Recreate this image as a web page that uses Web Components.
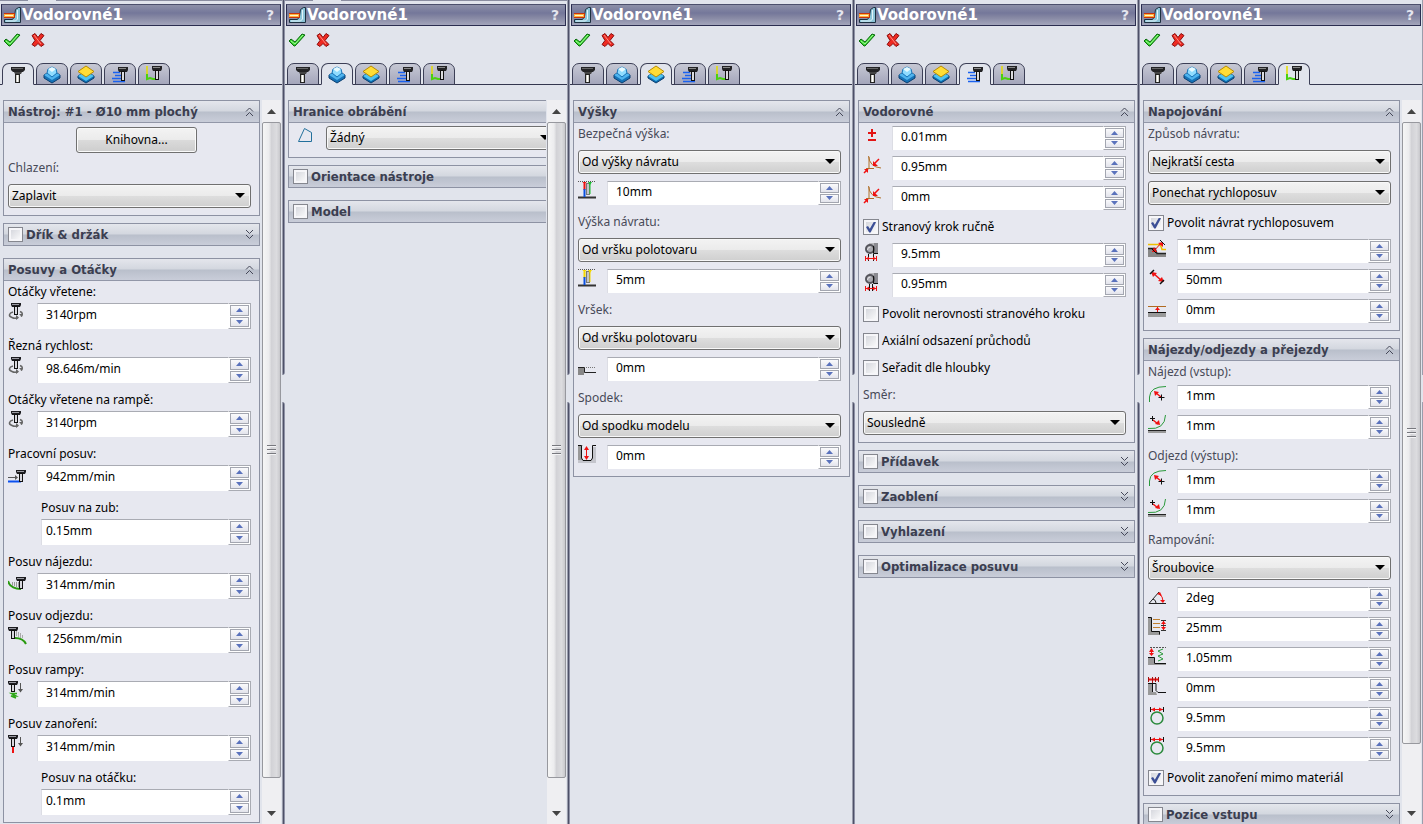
<!DOCTYPE html>
<html lang="cs">
<head>
<meta charset="utf-8">
<title>Vodorovné1</title>
<style>
  html, body { margin: 0; height: 100%; }
  body {
    font: 12px/22px "Noto Sans", "DejaVu Sans Condensed", sans-serif;
    color: #000;
    background: #e1e4ec;
    overflow: hidden;
  }
  main {
    display: grid;
    grid-template-columns: repeat(4, minmax(0, 285fr)) minmax(0, 283fr);
    height: 100vh;
  }
</style>
</head>
<body>
<main>
  <cam-panel name="Vodorovné1" active="0" scroll="656" rest="24" strip>
    <cam-section heading="Nástroj: #1 - Ø10 mm plochý">
      <cam-button>Knihovna...</cam-button>
      <cam-select label="Chlazení:" value="Zaplavit"></cam-select>
    </cam-section>
    <cam-section heading="Dřík &amp; držák" checkable collapsed></cam-section>
    <cam-section heading="Posuvy a Otáčky">
      <cam-field tall icon="spin" label="Otáčky vřetene:" value="3140rpm"></cam-field>
      <cam-field tall icon="spin" label="Řezná rychlost:" value="98.646m/min"></cam-field>
      <cam-field tall icon="spin" label="Otáčky vřetene na rampě:" value="3140rpm"></cam-field>
      <cam-field tall icon="feed" label="Pracovní posuv:" value="942mm/min"></cam-field>
      <cam-field tall indent label="Posuv na zub:" value="0.15mm"></cam-field>
      <cam-field tall icon="leadin" label="Posuv nájezdu:" value="314mm/min"></cam-field>
      <cam-field tall icon="leadout" label="Posuv odjezdu:" value="1256mm/min"></cam-field>
      <cam-field tall icon="ramp" label="Posuv rampy:" value="314mm/min"></cam-field>
      <cam-field tall icon="plunge" label="Posuv zanoření:" value="314mm/min"></cam-field>
      <cam-field tall indent label="Posuv na otáčku:" value="0.1mm"></cam-field>
    </cam-section>
  </cam-panel>

  <cam-panel name="Vodorovné1" active="1" scroll="656" rest="24" clipped strip>
    <cam-section heading="Hranice obrábění" inset>
      <cam-select icon="boundary" name="Hranice obrábění" value="Žádný"></cam-select>
    </cam-section>
    <cam-section heading="Orientace nástroje" checkable collapsed></cam-section>
    <cam-section heading="Model" checkable collapsed></cam-section>
  </cam-panel>

  <cam-panel name="Vodorovné1" active="2">
    <cam-section heading="Výšky">
      <cam-select label="Bezpečná výška:" value="Od výšky návratu"></cam-select>
      <cam-field icon="clearance" name="Bezpečná výška – odsazení" value="10mm"></cam-field>
      <cam-select label="Výška návratu:" value="Od vršku polotovaru"></cam-select>
      <cam-field icon="retract" name="Výška návratu – odsazení" value="5mm"></cam-field>
      <cam-select label="Vršek:" value="Od vršku polotovaru"></cam-select>
      <cam-field icon="top" name="Vršek – odsazení" value="0mm"></cam-field>
      <cam-select label="Spodek:" value="Od spodku modelu"></cam-select>
      <cam-field icon="bottom" name="Spodek – odsazení" value="0mm"></cam-field>
    </cam-section>
  </cam-panel>

  <cam-panel name="Vodorovné1" active="3">
    <cam-section heading="Vodorovné" inset>
      <cam-field icon="plusminus" name="Tolerance" value="0.01mm"></cam-field>
      <cam-field icon="smooth" name="Vyhlazovací odchylka" value="0.95mm"></cam-field>
      <cam-field icon="smooth" name="Odchylka rohů" value="0mm"></cam-field>
      <cam-check checked>Stranový krok ručně</cam-check>
      <cam-field icon="stepmax" name="Maximální stranový krok" value="9.5mm"></cam-field>
      <cam-field icon="stepmin" name="Minimální stranový krok" value="0.95mm"></cam-field>
      <cam-check>Povolit nerovnosti stranového kroku</cam-check>
      <cam-check>Axiální odsazení průchodů</cam-check>
      <cam-check>Seřadit dle hloubky</cam-check>
      <cam-select label="Směr:" value="Sousledně"></cam-select>
    </cam-section>
    <cam-section heading="Přídavek" checkable collapsed></cam-section>
    <cam-section heading="Zaoblení" checkable collapsed></cam-section>
    <cam-section heading="Vyhlazení" checkable collapsed></cam-section>
    <cam-section heading="Optimalizace posuvu" checkable collapsed></cam-section>
  </cam-panel>

  <cam-panel name="Vodorovné1" active="4" scroll="621" rest="58">
    <cam-section heading="Napojování">
      <cam-select label="Způsob návratu:" value="Nejkratší cesta"></cam-select>
      <cam-select name="Rychloposuv" value="Ponechat rychloposuv"></cam-select>
      <cam-check checked>Povolit návrat rychloposuvem</cam-check>
      <cam-field icon="safe" name="Bezpečná vzdálenost" value="1mm"></cam-field>
      <cam-field icon="stay" name="Maximální vzdálenost" value="50mm"></cam-field>
      <cam-field icon="lift" name="Výška zdvihu" value="0mm"></cam-field>
    </cam-section>
    <cam-section heading="Nájezdy/odjezdy a přejezdy">
      <cam-field dim icon="arcin" label="Nájezd (vstup):" value="1mm"></cam-field>
      <cam-field icon="arcdown" name="Svislý poloměr nájezdu" value="1mm"></cam-field>
      <cam-field dim icon="arcin" label="Odjezd (výstup):" value="1mm"></cam-field>
      <cam-field icon="arcdown" name="Svislý poloměr odjezdu" value="1mm"></cam-field>
      <cam-select label="Rampování:" value="Šroubovice"></cam-select>
      <cam-field icon="angle" name="Úhel rampování" value="2deg"></cam-field>
      <cam-field icon="rampstep" name="Maximální krok rampy" value="25mm"></cam-field>
      <cam-field icon="rampclear" name="Výška rampy" value="1.05mm"></cam-field>
      <cam-field icon="rampside" name="Radiální vůle rampy" value="0mm"></cam-field>
      <cam-field icon="helix" name="Průměr šroubovice" value="9.5mm"></cam-field>
      <cam-field icon="helix" name="Minimální průměr šroubovice" value="9.5mm"></cam-field>
      <cam-check checked>Povolit zanoření mimo materiál</cam-check>
    </cam-section>
    <cam-section heading="Pozice vstupu" checkable collapsed></cam-section>
  </cam-panel>
</main>

<script>
/* Small end mill: dark head, light shank. */
const mill = (x, y, len = 8) =>
  `<path d="M${x} ${y}h10v2l-1 2h-8l-1-2z" fill="#1c1c20"/><path d="M${x + 1} ${y + 1.5}h7" stroke="#9a9aa2"/>` +
  `<rect x="${x + 3.5}" y="${y + 3.5}" width="3" height="${len}" fill="#d8d8de" stroke="#111"/>`;
const down = `<path d="M12.500 2v9" stroke="#555"/><path d="M10 8l2.500 3.500L15 8z" fill="#555"/>`;
const clear = (a, b) =>
  `<path d="M0 .5h18" stroke="#555" stroke-dasharray="1 1"/><path d="M0 16.500h18" stroke="#333" stroke-width="2"/>
   <path d="M6.500 3v6" stroke="${a}" stroke-width="2"/><path d="M6.500 8v8" stroke="#0a50e0" stroke-width="2"/>
   <rect x="8.500" y="2.500" width="3" height="11" fill="#c4c4ca" stroke="#777"/>
   <path d="M12 2v11" stroke="${b}"/><path d="M4.500 1h4l-2 3z" fill="${a}"/><path d="M10 1h4l-2 3z" fill="${b}"/>`;
const step = (a, b) =>
  `<rect x="6" y="0" width="9" height="10" fill="#b9b9bd"/><rect x="11" y="0" width="4" height="10" fill="#8a8a90"/>
   <circle cx="7" cy="6" r="4" fill="#aaaab0" stroke="#55555c" stroke-width="2"/><path d="M4.500 7a3 3 0 0 1 3-3" stroke="#e6e6ea" fill="none"/>
   <path d="M10.500 3v7.500H15M${a}.5 11v7M${b}.5 11v7" stroke="#111" fill="none"/>
   <path d="M3 15.500h10" stroke="#e11"/><path d="M2.500 13v5M13.500 13v5" stroke="#e11"/><path d="M3 15.500l3-2v4zM13 15.500l-3-2v4z" fill="#e11"/>`;

const ICONS = {
  /* property rows */
  spin: `${mill(3, 0)}<path d="M5 9C1 10 0 13 4 14.500q3 1.500 6 0" stroke="#666" stroke-width="1.500" fill="none"/><path d="M12 8.500q4 1.500 1 5" stroke="#666" stroke-width="1.500" fill="none"/><path d="M8 12v5l3-2.500zM11 11l4 0-1 3z" fill="#666"/>`,
  feed: `<path d="M0 16.500h13" stroke="#0a50f0" stroke-width="2"/>${mill(8, 5)}<path d="M0 12.500h8" stroke="#555"/><path d="M7 10l3 2.500L7 15z" fill="#555"/>`,
  leadin: `<path d="M0 8q2 8 13 8" stroke="#2a9a10" stroke-width="2" fill="none"/><path d="M4.500 9v4M6.500 9v4M8.500 9v5M10.500 9v5" stroke="#999"/>${mill(8, 4)}`,
  leadout: `<path d="M7 11q8 0 11 6" stroke="#2a9a10" stroke-width="2" fill="none"/><path d="M8.500 4v5M10.500 5v5M12.500 6v5M14.500 8v3" stroke="#aaa"/>${mill(0, 0)}`,
  ramp: `${mill(0, 0, 7)}<path d="M9 12.500H3.500L8 15H3l5 2" stroke="#2fa81a" stroke-width="1.500" fill="none"/>${down}`,
  plunge: `<path d="M5 12v6" stroke="#e11" stroke-width="2"/>${mill(0, 0)}${down}`,
  boundary: `<path d="M5.500 15.500L11.500 2.500 18.500 6.500v9z" fill="none" stroke="#22709c"/>`,
  clearance: clear('#f01010', '#18c030'),
  retract: clear('#f4d800', '#f4d800'),
  top: `<path d="M0 10h6v8H0z" fill="#888"/><path d="M8 10.500h10" stroke="#777" stroke-dasharray="1 1"/><path d="M0 10.500h6.500v5H18" stroke="#222" fill="none"/>`,
  bottom: `<path d="M0 0h5v18H0z" fill="#999"/><path d="M12 2h6v16H0v-3h10z" fill="#c4c5cc"/><path d="M0 .5h3.500V13l1.500 2.500h8l1.500-2.500V.5H18" stroke="#111" fill="#e8e9f1"/><path d="M8.500 3v10" stroke="#f01010"/><path d="M6 5l2.500-4L11 5zM6 11l2.500 4 2.500-4z" fill="#f01010"/>`,
  plusminus: `<path d="M9 3v8M5 7h8M5 14h8" stroke="#e31515" stroke-width="2"/>`,
  smooth: `<path d="M5.500 0q1 11 12.500 12M6 1v11M3 12.500h8" stroke="#b0702a" fill="none"/><path d="M16 3l-5 5M1 17l4-4" stroke="#f01010" stroke-width="1.500"/><path d="M10 5v5h5zM1 13h4v4z" fill="#f01010"/>`,
  stepmax: step(5, 10),
  stepmin: step(6, 9),
  safe: `<path d="M0 9h7l2 6h9v3H0z" fill="#888"/><path d="M0 9.500h7l2 5h9" stroke="#222" fill="none" stroke-width="1.500"/><path d="M0 5.500h10q3 0 4 5h4" stroke="#f0c000" fill="none" stroke-width="1.500"/><path d="M6 12l7-8" stroke="#f01010"/><path d="M4 13l5 0-3-5zM10 4l5 4 0-5z" fill="#f01010"/><path d="M12 1l5 5M3 9l5 5" stroke="#111"/>`,
  stay: `<path d="M5 4l9 8" stroke="#f01010" stroke-width="1.500"/><path d="M3 3l6 1-4 4zM16 13l-6-1 4-4z" fill="#f01010"/><path d="M2 5l4-4M12 15l4-4" stroke="#111" stroke-width="1.500"/>`,
  lift: `<path d="M0 7.500h18" stroke="#b06a20"/><path d="M0 14h18v4H0z" fill="#999"/><path d="M0 13.500h18" stroke="#111"/><path d="M9.500 8v5" stroke="#f01010"/><path d="M7 11l2.500-3 2.500 3z" fill="#f01010"/>`,
  arcin: `<path d="M1.500 17V12Q2 1.500 18 1.500" stroke="#2b9a3c" fill="none"/><path d="M8 8l5 4" stroke="#f01010" stroke-width="1.500"/><path d="M6 6l5 1-4 4z" fill="#f01010"/><path d="M10.500 12.500h6M13.500 9.500v6" stroke="#111"/>`,
  arcdown: `<path d="M0 13.500Q17 15 17.500 0" stroke="#2b9a3c" fill="none"/><path d="M0 17h18" stroke="#999" stroke-width="2"/><path d="M0 15.500h18" stroke="#222"/><path d="M5 5l5 4" stroke="#f01010" stroke-width="1.500"/><path d="M12 10l-5-1 4-4z" fill="#f01010"/><path d="M2 3.500h5M4.500 1v5" stroke="#111"/>`,
  angle: `<path d="M11 5L1 16.500h17M5 12q3 1 3 4" stroke="#222" fill="none"/><path d="M11 7q4 2 4 7" stroke="#f01010" fill="none"/><path d="M9 7l3-2 2 4zM12 13h5l-2 3z" fill="#f01010"/>`,
  rampstep: `<path d="M0 0h3v14h9v4H0z" fill="#999"/><path d="M0 .5h3.500v14h8v3" stroke="#111" fill="none"/><path d="M5 2.500h7M5 6.500h7M5 10.500h7" stroke="#c08030"/><path d="M15.500 4v9" stroke="#f01010"/><path d="M13 3.500h5M13 8.500h5M13 13.500h5" stroke="#333"/><path d="M13 7l2.500-3 2.500 3zM13 10l2.500 3 2.500-3z" fill="#f01010"/>`,
  rampclear: `<path d="M2 .5h16" stroke="#555" stroke-dasharray="2 1"/><path d="M0 11h6v6h12v1H0z" fill="#999"/><path d="M0 10.500h6.500v6H18" stroke="#111" fill="none"/><path d="M15 2l-5 2 5 3-5 2 5 3-5 2" stroke="#2b9a3c" fill="none"/><path d="M3.500 2v6" stroke="#f01010"/><path d="M1 5l2.500-4L6 5zM1 6l2.500 3L6 6z" fill="#f01010"/>`,
  rampside: `<path d="M0 6h5v9h3l1 3H0z" fill="#999"/><path d="M0 6.500h8v7l2 2h8M4.500 7v8" stroke="#111" fill="none"/><path d="M1 2.500h10" stroke="#f01010" stroke-width="2"/><path d="M.5 0v5M4.500 0v6M7.500 0v5M10.500 0v5" stroke="#a01010"/>`,
  helix: `<circle cx="9" cy="11" r="6" stroke="#2b8a3c" stroke-width="1.500" fill="none"/><path d="M3 2.500h12" stroke="#f01010"/><path d="M2.500 0v5M15.500 0v5" stroke="#111"/><path d="M3 2.500l4-2v4zM15 2.500l-4-2v4z" fill="#f01010"/>`,

  /* tabs */
  tool: `<path d="M4 3h14v3l-2 2H6L4 6z" fill="#232325"/><path d="M5 4.500h11" stroke="#666"/><path d="M7 8h8l-1 2H8z" fill="#444"/><rect x="8.500" y="10.500" width="4" height="8" fill="#cfcfc8" stroke="#222"/><path d="M10.500 11v7" stroke="#fff"/>`,
  model: `<path d="M3 11l8-5 8 5v3l-8 5-8-5z" fill="#1673b8" stroke="#0b3f70"/><path d="M3 11l8-5 8 5-8 5z" fill="#4fb4ee"/><path d="M6 9l1-4 4-2 4 2 1 4-5 4z" fill="#8fdcff" stroke="#1673b8"/><path d="M7 5l4-2 4 2-4 3z" fill="#e6faff"/>`,
  heights: `<path d="M3 12l8-5 8 5v2l-8 5-8-5z" fill="#0d6fb2" stroke="#0b3f70"/><path d="M3 12l8-5 8 5-8 5z" fill="#4fc3f0"/><path d="M3 7.500L11 2l8 5.500-8 5.500z" fill="#ffdd36" stroke="#b88a00"/>`,
  passes: `<path d="M4 8.500h7M6 11.500h6M3 14.500h9M4 17.500h12" stroke="#1a62f0" stroke-width="1.500"/><path d="M9 3h10v3l-1 2h-8l-1-2z" fill="#232325"/><path d="M10 4.500h7" stroke="#888"/><rect x="12.500" y="7.500" width="3" height="9" fill="#dcdce0" stroke="#111"/>`,
  linking: `<path d="M4 2v10" stroke="#e6dc00" stroke-width="1.500"/><path d="M4 10v5l3-1 3 1h3" stroke="#4ad010" stroke-width="2" fill="none"/><path d="M9 2h10v3l-1 2h-8L9 5z" fill="#232325"/><path d="M10 3.500h7" stroke="#888"/><rect x="12.500" y="6.500" width="3" height="9" fill="#dcdce0" stroke="#111"/>`,

  /* title bar and actions */
  operation: `<path d="M1.500 13.500h8l2-3 1-7 3-2h2v15h-16z" fill="#8cc4d8" stroke="#1c3040"/><path d="M14.500 4v9l-2 2H3" fill="none" stroke="#e2f4fa"/><rect x="1" y="7" width="11" height="5" fill="#c8330c"/><rect x="1" y="8" width="10" height="3" fill="#ffb43c"/><path d="M2 9.500h8" stroke="#fff3cf"/>`,
  accept: `<path d="M2 10l2-2 4 3 7-8 3 1-10 11H7z" fill="#35d32c" stroke="#0c6b10"/><path d="M4 10l4 3 8-9" stroke="#a6f79c" fill="none"/>`,
  cancel: `<path d="M4 4.500l3-2 3 4 3-4 3 2-4 5 4 4-3 2-3-3-3 3-3-2 3-4z" fill="#ee2a22" stroke="#8c0d0d"/><path d="M6 4l7 9" stroke="#ff8a80"/>`
};

const BOX = `*{box-sizing:border-box} button,input,select{font:inherit;color:inherit;margin:0}`;

class CamElement extends HTMLElement {
  connectedCallback() {
    if (this.shadowRoot) return;
    const t = document.createElement('template');
    t.innerHTML = `<style>${BOX}${this.css()}</style>${this.html()}`;
    this.attachShadow({ mode: 'open' }).append(t.content.cloneNode(true));
  }
  a(n) { return (this.getAttribute(n) ?? '').replace(/&/g, '&amp;').replace(/"/g, '&quot;'); }
}

class CamIcon extends CamElement {
  css() { return `:host{display:block;width:22px;height:22px} svg{display:block}`; }
  html() { return `<svg width="22" height="22" viewBox="0 0 22 22" aria-hidden="true">${ICONS[this.a('name')] ?? ''}</svg>`; }
}

class CamButton extends CamElement {
  css() {
    return `:host{display:flex;justify-content:center;margin:4px 0;padding-left:14px}
      button{width:53%;height:26px;padding:0;border:1px solid #707070;border-radius:3px;
        background:linear-gradient(#f3f3f3,#ebebeb 50%,#dadada 52%,#cdcdcd);box-shadow:inset 0 0 0 1px #fafafa}`;
  }
  html() { return `<button type="button"><slot></slot></button>`; }
}

class CamSelect extends CamElement {
  css() {
    return `:host{display:block;margin-bottom:7px}
      label{display:block;color:#474a58;height:22px;margin-bottom:5px}
      .row{display:flex} cam-icon{flex:none;width:33px}
      .box{flex:1;min-width:0;display:grid;align-items:center}
      .box>*{grid-area:1/1}
      select{appearance:none;width:100%;height:24px;padding:0 24px 0 3px;border:1px solid #707070;border-radius:3px;
        background:linear-gradient(#f3f3f3,#ebebeb 50%,#dddddd 52%,#cfcfcf);box-shadow:inset 0 0 0 1px #f8f8f8}
      svg{justify-self:end;margin-right:6px;pointer-events:none}`;
  }
  html() {
    const icon = this.hasAttribute('icon') ? `<cam-icon name="${this.a('icon')}"></cam-icon>` : '';
    const label = this.hasAttribute('label') ? `<label for="s">${this.a('label')}</label>` : '';
    return `${label}<div class="row">${icon}<div class="box">
      <select id="s" ${label ? '' : `aria-label="${this.a('name')}"`}><option>${this.a('value')}</option></select>
      <svg width="10" height="6" aria-hidden="true"><path d="M0 0h10L5 5z"/></svg></div></div>`;
  }
}

class CamField extends CamElement {
  css() {
    return `:host{display:block;margin-bottom:6px;--h:24px}
      :host([tall]){--h:26px}
      label{display:block;height:22px}
      :host([dim]) label{color:#474a58;margin-bottom:2px}
      :host([indent]){margin-left:33px}
      .row{display:flex;height:var(--h)}
      cam-icon{flex:none;width:29px}
      input{flex:1;min-width:0;height:100%;padding:0 7px 4px 8px;border:0;border-top:1px solid #a9abb3;border-left:1px solid #dcdde4;background:#fff;outline:0}
      :host([indent]) input{padding-left:4px}
      .spin{flex:none;width:23px;display:flex;flex-direction:column;gap:1px;padding:1px;border:1px solid #a9abb3;border-left-color:#fff;background:#fff}
      button{flex:1;min-height:0;padding:0;display:grid;place-items:center;border:1px solid #a3a6b0;background:linear-gradient(#fafafc,#e3e4ec)}
      svg{display:block;fill:#5a72bc}`;
  }
  html() {
    const icon = this.hasAttribute('icon') ? `<cam-icon name="${this.a('icon')}"></cam-icon>` : '';
    const label = this.hasAttribute('label') ? `<label for="i">${this.a('label')}</label>` : '';
    return `${label}<div class="row">${icon}
      <input id="i" type="text" value="${this.a('value')}" ${label ? '' : `aria-label="${this.a('name')}"`}>
      <div class="spin"><button type="button" aria-label="Zvýšit"><svg width="7" height="4"><path d="M0 4h7L3.500 0z"/></svg></button>
      <button type="button" aria-label="Snížit"><svg width="7" height="4"><path d="M0 0h7L3.500 4z"/></svg></button></div></div>`;
  }
}

const TICK = `
  input{appearance:none;flex:none;width:16px;height:16px;display:grid;place-items:center;border:1px solid #85878f;
    background:linear-gradient(135deg,#cfd1d8,#fff);box-shadow:inset 0 0 0 2px #f6f6f9}
  input:checked::before{content:"";width:10px;height:11px;background:#3c4f96;
    clip-path:polygon(0 50%,20% 42%,38% 66%,80% 0,100% 6%,46% 100%,32% 100%)}`;

class CamCheck extends CamElement {
  css() {
    return `:host{display:block;height:22px;margin-bottom:5px} ${TICK}
      label{display:flex;align-items:center;gap:3px;height:22px;white-space:nowrap}`;
  }
  html() { return `<label><input type="checkbox" ${this.hasAttribute('checked') ? 'checked' : ''}><slot></slot></label>`; }
}

class CamSection extends CamElement {
  css() {
    return `:host{display:block;border:1px solid #8d92a3;background:#e7e8f0;margin-bottom:7px}
      :host([collapsed]){margin-bottom:12px}
      header{display:flex;align-items:center;height:22px;padding:0 4px;border-bottom:1px solid #9297a8;
        background:linear-gradient(#e4e6ec,#d3d7df 48%,#b9bfcb 52%,#c9cdd9)}
      :host([collapsed]) header{height:21px;border-bottom:0}
      h2{flex:1;min-width:0;margin:0;font:bold 13px/20px "DejaVu Sans Condensed","DejaVu Sans",sans-serif;color:#3b3e50;white-space:nowrap}
      label{display:flex;align-items:center;gap:3px} ${TICK}
      header input{width:15px;height:15px}
      .toggle{flex:none;width:12px;height:18px;padding:0;border:0;background:none;display:grid;place-items:center}
      .toggle svg{fill:none;stroke:#454859}
      .body{padding:0 8px 1px 4px}
      :host([inset]) .body{padding-top:3px}
      :host([collapsed]) .body{display:none}
      ::slotted(cam-select:last-child){margin-bottom:6px}`;
  }
  html() {
    const h = this.a('heading'), c = this.hasAttribute('collapsed');
    const title = this.hasAttribute('checkable') ? `<label><input type="checkbox">${h}</label>` : h;
    const d = c ? 'M1 0l3.500 3.500L8 0M1 5l3.500 3.500L8 5' : 'M1 4.500L4.500 1 8 4.500M1 9l3.500-3.500L8 9';
    return `<header><h2>${title}</h2><button class="toggle" type="button" aria-label="${c ? 'Rozbalit' : 'Sbalit'}">
      <svg width="9" height="10"><path d="${d}"/></svg></button></header><div class="body"><slot></slot></div>`;
  }
}

class CamScrollbar extends CamElement {
  css() {
    return `:host{display:flex;flex-direction:column;width:19px;background:#efeff2}
      button{flex:none;height:22px;padding:0;border:0;background:none;display:grid;place-items:center}
      .thumb{flex:${this.a('size')} 0 0;display:grid;place-content:center;gap:2px;border:1px solid #97989e;border-radius:2px;
        background:linear-gradient(90deg,#f6f6f6,#ececee 35%,#d2d2d6 50%,#dcdcdf 80%,#c8c8cc)}
      .thumb i{display:block;width:9px;height:2px;background:#77787e;border-bottom:1px solid #f4f4f6}
      .rest{flex:${this.a('rest')} 0 0}
      svg{fill:#444}`;
  }
  html() {
    return `<button type="button" aria-label="Nahoru"><svg width="9" height="5"><path d="M0 5h9L4.500 0z"/></svg></button>
      <div class="thumb"><i></i><i></i><i></i></div><div class="rest"></div>
      <button type="button" aria-label="Dolů"><svg width="9" height="5"><path d="M0 0h9L4.500 5z"/></svg></button>`;
  }
}

class CamSplitter extends CamElement {
  css() {
    return `:host{display:flex;flex-direction:column;width:3px}
      i{border-left:1px solid #9a9dac;border-right:1px solid #8f92a6;background:#4d5068}
      .up{flex:375;border-radius:0 0 3px 0} .gap{height:27px} .dn{flex:422;border-radius:0 3px 0 0}`;
  }
  html() { return `<i class="up"></i><div class="gap"></div><i class="dn"></i>`; }
}

class CamPanel extends CamElement {
  css() {
    return `:host{display:flex;min-width:0;min-height:0;background:#e1e4ec}
      .main{flex:1;min-width:0;display:flex;flex-direction:column;padding-top:4px}
      :host([strip]) .main{background:linear-gradient(90deg,#8a8da0 28px,#e1e4ec 28px 56px,#8a8da0 56px) top/100% 1px no-repeat}
      .title{display:flex;align-items:center;height:22px;margin:0 1px;padding:0 6px 0 1px;color:#fff;border:1px solid #2b2d50;border-top-color:#4c4f6c;
        background:linear-gradient(#8d90a8,#74779a 40%,#8486a2 60%,#a3a5bb)}
      .title cam-icon{width:18px;height:18px;overflow:hidden}
      h1{flex:1;margin:0 0 0 1px;font:bold 15px/20px "DejaVu Sans",sans-serif}
      .help{padding:0;border:0;background:none;color:#e4e5ee;font:bold 14px/20px "DejaVu Sans",sans-serif}
      .actions{display:flex;gap:8px;height:37px;padding:5px 0 0 2px}
      .actions button{width:18px;height:20px;padding:0;border:0;background:none}
      .tabs{display:flex;gap:2px;height:22px;padding-left:2px;margin-bottom:15px;box-shadow:inset 0 -1px #34364e}
      .tabs button{width:32px;height:22px;padding:0 0 0 4px;border:1px solid #3c3f56;border-radius:7px 7px 0 0;
        background:linear-gradient(#c6c8d4,#a4a6bb);overflow:hidden}
      .tabs button[aria-selected=true]{background:#e1e4ec;border-bottom-color:#e1e4ec}
      .view{flex:1;min-height:0;display:flex;gap:1px;overflow:hidden}
      .list{flex:1;min-width:0;padding:0 1px 0 3px;overflow:hidden}
      :host(:not([scroll])) .list{padding-right:2px}
      cam-scrollbar{margin-right:1px}
      :host([clipped]) .list{padding-right:0}
      :host([clipped]) .inner{width:calc(100% + 19px)}
      :host(:last-child) cam-splitter{width:1px}`;
  }
  html() {
    const names = { tool: 'Nástroj', model: 'Geometrie', heights: 'Výšky', passes: 'Průchody', linking: 'Napojení' };
    const tabs = Object.entries(names).map(([k, v], i) =>
      `<button type="button" role="tab" aria-label="${v}" aria-selected="${i == this.a('active')}"><cam-icon name="${k}"></cam-icon></button>`).join('');
    const bar = this.hasAttribute('scroll') ? `<cam-scrollbar size="${this.a('scroll')}" rest="${this.a('rest')}"></cam-scrollbar>` : '';
    return `<div class="main">
      <div class="title"><cam-icon name="operation"></cam-icon><h1>${this.a('name')}</h1><button class="help" type="button">?</button></div>
      <div class="actions"><button type="button" aria-label="OK"><cam-icon name="accept"></cam-icon></button><button type="button" aria-label="Storno"><cam-icon name="cancel"></cam-icon></button></div>
      <div class="tabs" role="tablist">${tabs}</div>
      <div class="view"><div class="list"><div class="inner"><slot></slot></div></div>${bar}</div>
    </div><cam-splitter></cam-splitter>`;
  }
}

customElements.define('cam-icon', CamIcon);
customElements.define('cam-button', CamButton);
customElements.define('cam-select', CamSelect);
customElements.define('cam-field', CamField);
customElements.define('cam-check', CamCheck);
customElements.define('cam-section', CamSection);
customElements.define('cam-scrollbar', CamScrollbar);
customElements.define('cam-splitter', CamSplitter);
customElements.define('cam-panel', CamPanel);
</script>
</body>
</html>
